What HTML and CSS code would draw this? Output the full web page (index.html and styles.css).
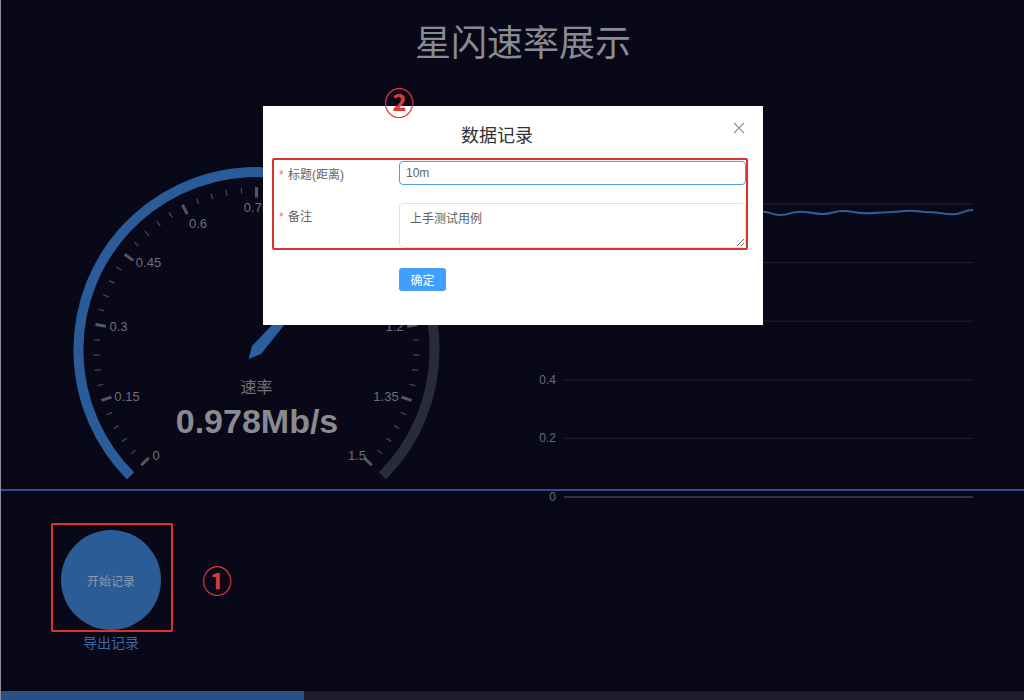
FILE: index.html
```html
<!DOCTYPE html>
<html lang="zh-CN">
<head>
<meta charset="utf-8">
<title>星闪速率展示</title>
<link rel="stylesheet" href="styles.css">
</head>
<body>
<div class="app">
  <h1 class="title">星闪速率展示</h1>

  <section class="monitor">
    <svg class="gauge" viewBox="0 85 512 404" width="512" height="404">
      <defs>
        <line id="mt" x1="93.5" y1="350" x2="99.5" y2="350"/>
        <line id="bt" x1="93.5" y1="350" x2="104" y2="350"/>
      </defs>
      <path class="arc-done" d="M130.63,475.87 A178,178 0 0 1 373.46,215.82"/>
      <path class="arc-rest" d="M373.46,215.82 A178,178 0 0 1 382.37,475.87"/>
      <g class="minor">
        <use href="#mt" transform="rotate(-39.6 256.5 350)"/>
        <use href="#mt" transform="rotate(-34.2 256.5 350)"/>
        <use href="#mt" transform="rotate(-28.8 256.5 350)"/>
        <use href="#mt" transform="rotate(-23.4 256.5 350)"/>
        <use href="#mt" transform="rotate(-12.6 256.5 350)"/>
        <use href="#mt" transform="rotate(-7.2 256.5 350)"/>
        <use href="#mt" transform="rotate(-1.8 256.5 350)"/>
        <use href="#mt" transform="rotate(3.6 256.5 350)"/>
        <use href="#mt" transform="rotate(14.4 256.5 350)"/>
        <use href="#mt" transform="rotate(19.8 256.5 350)"/>
        <use href="#mt" transform="rotate(25.2 256.5 350)"/>
        <use href="#mt" transform="rotate(30.6 256.5 350)"/>
        <use href="#mt" transform="rotate(41.4 256.5 350)"/>
        <use href="#mt" transform="rotate(46.8 256.5 350)"/>
        <use href="#mt" transform="rotate(52.2 256.5 350)"/>
        <use href="#mt" transform="rotate(57.6 256.5 350)"/>
        <use href="#mt" transform="rotate(68.4 256.5 350)"/>
        <use href="#mt" transform="rotate(73.8 256.5 350)"/>
        <use href="#mt" transform="rotate(79.2 256.5 350)"/>
        <use href="#mt" transform="rotate(84.6 256.5 350)"/>
        <use href="#mt" transform="rotate(95.4 256.5 350)"/>
        <use href="#mt" transform="rotate(100.8 256.5 350)"/>
        <use href="#mt" transform="rotate(106.2 256.5 350)"/>
        <use href="#mt" transform="rotate(111.6 256.5 350)"/>
        <use href="#mt" transform="rotate(122.4 256.5 350)"/>
        <use href="#mt" transform="rotate(127.8 256.5 350)"/>
        <use href="#mt" transform="rotate(133.2 256.5 350)"/>
        <use href="#mt" transform="rotate(138.6 256.5 350)"/>
        <use href="#mt" transform="rotate(149.4 256.5 350)"/>
        <use href="#mt" transform="rotate(154.8 256.5 350)"/>
        <use href="#mt" transform="rotate(160.2 256.5 350)"/>
        <use href="#mt" transform="rotate(165.6 256.5 350)"/>
        <use href="#mt" transform="rotate(176.4 256.5 350)"/>
        <use href="#mt" transform="rotate(181.8 256.5 350)"/>
        <use href="#mt" transform="rotate(187.2 256.5 350)"/>
        <use href="#mt" transform="rotate(192.6 256.5 350)"/>
        <use href="#mt" transform="rotate(203.4 256.5 350)"/>
        <use href="#mt" transform="rotate(208.8 256.5 350)"/>
        <use href="#mt" transform="rotate(214.2 256.5 350)"/>
        <use href="#mt" transform="rotate(219.6 256.5 350)"/>
      </g>
      <g class="major">
        <use href="#bt" transform="rotate(-45 256.5 350)"/>
        <use href="#bt" transform="rotate(-18 256.5 350)"/>
        <use href="#bt" transform="rotate(9 256.5 350)"/>
        <use href="#bt" transform="rotate(36 256.5 350)"/>
        <use href="#bt" transform="rotate(63 256.5 350)"/>
        <use href="#bt" transform="rotate(90 256.5 350)"/>
        <use href="#bt" transform="rotate(117 256.5 350)"/>
        <use href="#bt" transform="rotate(144 256.5 350)"/>
        <use href="#bt" transform="rotate(171 256.5 350)"/>
        <use href="#bt" transform="rotate(198 256.5 350)"/>
        <use href="#bt" transform="rotate(225 256.5 350)"/>
      </g>
      <g class="g-label">
        <text x="156" y="455">0</text>
        <text x="127" y="396">0.15</text>
        <text x="118.5" y="326">0.3</text>
        <text x="148.5" y="262">0.45</text>
        <text x="198" y="223">0.6</text>
        <text x="256.5" y="207">0.75</text>
        <text x="315" y="223">0.9</text>
        <text x="364.5" y="262">1.05</text>
        <text x="394.5" y="326">1.2</text>
        <text x="386" y="396">1.35</text>
        <text x="357" y="455">1.5</text>
      </g>
      <polygon class="pointer" points="248.62,359.05 251.98,346.06 352.38,239.9 261.02,353.94"/>
      <text class="g-name" x="256.5" y="386">速率</text>
      <text class="g-value" x="257" y="421">0.978Mb/s</text>
    </svg>

    <svg class="chart" viewBox="512 85 512 420" width="512" height="420">
      <g class="grid">
        <line x1="564" y1="204" x2="973" y2="204"/>
        <line x1="564" y1="262.6" x2="973" y2="262.6"/>
        <line x1="564" y1="321.2" x2="973" y2="321.2"/>
        <line x1="564" y1="379.8" x2="973" y2="379.8"/>
        <line x1="564" y1="438.4" x2="973" y2="438.4"/>
      </g>
      <line class="axis" x1="564" y1="497" x2="973" y2="497"/>
      <g class="y-label">
        <text x="556" y="204">1</text>
        <text x="556" y="262.6">0.8</text>
        <text x="556" y="321.2">0.6</text>
        <text x="556" y="379.8">0.4</text>
        <text x="556" y="438.4">0.2</text>
        <text x="556" y="497">0</text>
      </g>
      <path class="series" d="M564,212 C663,212 663,211.7 763,211.7 C771.5,211.7 771.5,215 780,215 C790,215 790,211.7 800,211.7 C811.5,211.7 811.5,214 823,214 C833,214 833,211 843,211 C855,211 855,213.3 867,213.3 C877,213.3 877,212.3 887,212.3 C898.5,212.3 898.5,210.7 910,210.7 C920,210.7 920,212.3 930,212.3 C941.5,212.3 941.5,214.3 953,214.3 C963,214.3 963,210 973,210"/>
    </svg>
  </section>

  <section class="controls">
    <div class="record">
      <button class="record-btn" type="button">开始记录</button>
      <a class="export">导出记录</a>
    </div>
  </section>

  <div class="progress"><div class="progress-fill" style="width:304px"></div></div>

  <div class="dialog">
    <div class="dialog-header">
      <span class="dialog-title">数据记录</span>
      <button class="dialog-close" type="button" aria-label="关闭">
        <svg viewBox="0 0 12 12" width="12" height="12"><path d="M1 1L11 11M11 1L1 11"/></svg>
      </button>
    </div>
    <form class="form">
      <div class="form-item">
        <label class="label"><span class="req">*</span> 标题(距离)</label>
        <input class="input" type="text" value="10m">
      </div>
      <div class="form-item">
        <label class="label"><span class="req">*</span> 备注</label>
        <textarea class="textarea">上手测试用例</textarea>
      </div>
      <div class="form-actions">
        <button class="btn-primary" type="button">确定</button>
      </div>
    </form>
  </div>

  <div class="mark-box mark-box-1"></div>
  <div class="mark-box mark-box-2"></div>
  <span class="mark mark-1">①</span>
  <span class="mark mark-2">②</span>
</div>
</body>
</html>
```

FILE: styles.css
```css
* { box-sizing: border-box; }
html, body { margin: 0; padding: 0; }
body {
  width: 1024px;
  height: 700px;
  overflow: hidden;
  background: #080818;
  font-family: "Liberation Sans", "Noto Sans CJK SC", sans-serif;
}
.app {
  position: relative;
  width: 1024px;
  height: 700px;
  display: flex;
  flex-direction: column;
}
.app::before {
  content: "";
  position: absolute;
  left: 0; top: 0; bottom: 0;
  width: 1px;
  background: #8e8e9c;
}
.title {
  margin: 0;
  height: 85px;
  line-height: 80px;
  padding-left: 22px;
  text-align: center;
  font-size: 36px;
  font-weight: normal;
  color: #8a8a92;
  font-family: "Noto Sans CJK SC", sans-serif;
}
.monitor {
  display: flex;
  align-items: flex-start;
  height: 406px;
  border-bottom: 2px solid #2f4f88;
}
.gauge, .chart { display: block; flex: none; overflow: visible; }

.arc-done { fill: none; stroke: #2b5c9a; stroke-width: 10; }
.arc-rest { fill: none; stroke: #2a2b38; stroke-width: 10; }
.minor use { stroke: #4a4a55; stroke-width: 1.2; }
.major use { stroke: #56565f; stroke-width: 3; }
.g-label text {
  fill: #6e6e78;
  font-size: 13px;
  text-anchor: middle;
  dominant-baseline: central;
  font-family: "Liberation Sans", sans-serif;
}
.pointer { fill: #2d5f9f; }
.g-name {
  fill: #707078;
  font-size: 16px;
  text-anchor: middle;
  dominant-baseline: central;
  font-family: "Noto Sans CJK SC", sans-serif;
}
.g-value {
  fill: #8a8a90;
  font-size: 34px;
  font-weight: bold;
  text-anchor: middle;
  dominant-baseline: central;
  font-family: "Liberation Sans", sans-serif;
}

.grid line { stroke: #22222e; stroke-width: 1; }
.axis { stroke: #5c5c66; stroke-width: 1; }
.y-label text {
  fill: #6b6b74;
  font-size: 12px;
  text-anchor: end;
  dominant-baseline: central;
  font-family: "Liberation Sans", sans-serif;
}
.series { fill: none; stroke: #2f5f9a; stroke-width: 2; }

.controls {
  flex: 1;
  padding: 39px 0 0 61px;
}
.record {
  width: 100px;
  display: flex;
  flex-direction: column;
  align-items: center;
}
.record-btn {
  width: 100px;
  height: 100px;
  border: none;
  border-radius: 50%;
  padding: 0;
  background: #2b5c95;
  color: #8c9bb0;
  font-size: 12px;
  font-family: "Noto Sans CJK SC", sans-serif;
}
.export {
  margin-top: 2px;
  font-size: 14px;
  line-height: 20px;
  color: #3a6aa8;
  white-space: nowrap;
  font-family: "Noto Sans CJK SC", sans-serif;
}
.progress {
  height: 10px;
  background: #1c1c2a;
  border-top: 1px solid #04040c;
}
.progress-fill { height: 100%; background: #2a4f85; }

.dialog {
  position: absolute;
  left: 263px;
  top: 106px;
  width: 500px;
  height: 219px;
  background: #fff;
}
.dialog-header {
  position: relative;
  height: 55px;
  padding: 16px 32px 0 0;
  text-align: center;
  font-size: 18px;
  line-height: 24px;
  color: #303133;
  font-family: "Noto Sans CJK SC", sans-serif;
}
.dialog-close {
  position: absolute;
  top: 16px;
  right: 18px;
  width: 12px;
  height: 12px;
  padding: 0;
  border: none;
  background: none;
}
.dialog-close svg { display: block; }
.dialog-close path { stroke: #909399; stroke-width: 1.2; fill: none; }
.form { margin: 0; padding: 0 17px 0 16px; }
.form-item { display: flex; align-items: flex-start; }
.form-item + .form-item { margin-top: 16px; }
.label {
  width: 120px;
  flex: none;
  padding-top: 2px;
  font-size: 12px;
  line-height: 24px;
  color: #606266;
}
.req { color: #f56c6c; margin-right: 1px; }
.input {
  width: 347px;
  height: 24px;
  margin: 0;
  padding: 0 6px;
  border: 1px solid #4c9fe0;
  border-radius: 4px;
  outline: none;
  font-size: 12px;
  color: #606266;
  font-family: "Liberation Sans", "Noto Sans CJK SC", sans-serif;
}
.textarea {
  width: 347px;
  height: 45px;
  margin: 0;
  padding: 5px 10px;
  border: 1px solid #dcdfe6;
  border-radius: 4px;
  outline: none;
  font-size: 12px;
  line-height: 20px;
  color: #606266;
  font-family: "Liberation Sans", "Noto Sans CJK SC", sans-serif;
  resize: vertical;
}
.form-actions { padding-left: 120px; margin-top: 20px; }
.btn-primary {
  display: block;
  width: 47px;
  height: 23px;
  padding: 0;
  border: none;
  border-radius: 3px;
  background: #409eff;
  color: #fff;
  font-size: 12px;
  font-family: "Noto Sans CJK SC", sans-serif;
}

.mark-box {
  position: absolute;
  border: 2px solid #d9332b;
  border-radius: 2px;
}
.mark-box-1 { left: 51px; top: 523px; width: 122px; height: 109px; }
.mark-box-2 { left: 272px; top: 158px; width: 476px; height: 92px; }
.mark {
  position: absolute;
  width: 32px;
  height: 32px;
  line-height: 32px;
  text-align: center;
  font-size: 30px;
  font-weight: bold;
  color: #d93a32;
  font-family: "Noto Sans CJK SC", sans-serif;
}
.mark-1 { left: 201px; top: 563px; }
.mark-2 { left: 383px; top: 85px; }
```
